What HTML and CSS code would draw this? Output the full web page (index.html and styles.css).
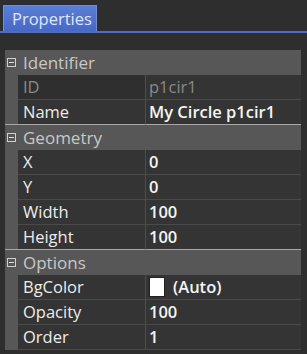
FILE: index.html
```html
<!DOCTYPE html>
<html>
<head>
<meta charset="utf-8">
<link rel="stylesheet" href="styles.css">
</head>
<body>
<div class="tabbar">
  <div class="tab">Properties</div>
</div>
<div class="grid">
  <div class="section">
    <div class="header"><span class="toggle"><svg width="9" height="9" viewBox="0 0 9 9"><rect x="0.5" y="0.5" width="8" height="8" fill="none" stroke="#cfcfcf"/><line x1="2" y1="4.5" x2="7" y2="4.5" stroke="#e0e0e0"/></svg></span>Identifier</div>
    <div class="row disabled"><span class="strip"></span><span class="label">ID</span><span class="value">p1cir1</span></div>
    <div class="row"><span class="strip"></span><span class="label">Name</span><span class="value">My Circle p1cir1</span></div>
  </div>
  <div class="section">
    <div class="header"><span class="toggle"><svg width="9" height="9" viewBox="0 0 9 9"><rect x="0.5" y="0.5" width="8" height="8" fill="none" stroke="#cfcfcf"/><line x1="2" y1="4.5" x2="7" y2="4.5" stroke="#e0e0e0"/></svg></span>Geometry</div>
    <div class="row"><span class="strip"></span><span class="label">X</span><span class="value">0</span></div>
    <div class="row"><span class="strip"></span><span class="label">Y</span><span class="value">0</span></div>
    <div class="row"><span class="strip"></span><span class="label">Width</span><span class="value">100</span></div>
    <div class="row"><span class="strip"></span><span class="label">Height</span><span class="value">100</span></div>
  </div>
  <div class="section">
    <div class="header"><span class="toggle"><svg width="9" height="9" viewBox="0 0 9 9"><rect x="0.5" y="0.5" width="8" height="8" fill="none" stroke="#cfcfcf"/><line x1="2" y1="4.5" x2="7" y2="4.5" stroke="#e0e0e0"/></svg></span>Options</div>
    <div class="row"><span class="strip"></span><span class="label">BgColor</span><span class="value"><span class="swatch"></span>(Auto)</span></div>
    <div class="row"><span class="strip"></span><span class="label">Opacity</span><span class="value">100</span></div>
    <div class="row"><span class="strip"></span><span class="label">Order</span><span class="value">1</span></div>
  </div>
</div>
</body>
</html>
```
FILE: styles.css
```css
html, body {
  margin: 0;
  padding: 0;
  background: #2e2e2e;
  font-family: "Open Sans", "Noto Sans", sans-serif;
  font-size: 15px;
  color: #e6e6e6;
}
.tabbar {
  padding: 5px 0 0 3px;
  border-bottom: 2px solid #4a6ccb;
  height: 26px;
  display: flex;
}
.tab {
  width: 94px;
  height: 26px;
  box-sizing: border-box;
  background: linear-gradient(#5a7fd6, #4868c6);
  border: 1px solid #6c8ddd;
  border-bottom: none;
  color: #dfe6f6;
  font-size: 16.5px;
  line-height: 25px;
  padding-left: 8px;
  white-space: nowrap;
}
.grid {
  margin: 17px 0 0 5px;
  width: 296px;
}
.header {
  height: 25px;
  background: #575757;
  display: flex;
  align-items: center;
  color: #c8c8c8;
  font-size: 17px;
}
.toggle {
  width: 18px;
  padding-left: 2px;
  box-sizing: border-box;
  display: flex;
  align-items: center;
}
.row {
  height: 25px;
  display: flex;
}
.strip {
  width: 13px;
  background: #575757;
  flex: none;
  box-sizing: border-box;
}
.label, .value {
  box-sizing: border-box;
  height: 25px;
  border-bottom: 1px solid #4a4a4a;
  background: #343434;
  display: flex;
  align-items: center;
  line-height: 24px;
  font-size: 16.5px;
  white-space: nowrap;
}
.label {
  width: 128px;
  padding-left: 5px;
  border-right: 1px solid #4e4e4e;
  color: #ececec;
}
.value {
  flex: 1;
  padding-left: 3px;
  font-weight: 600;
  color: #f4f4f4;
}
.disabled .label {
  color: #8a8a8a;
  background: #2f2f2f;
}
.disabled .value {
  color: #8a8a8a;
  font-weight: 400;
}
.section:not(:last-child) .row:last-child .label,
.section:not(:last-child) .row:last-child .value,
.section:not(:last-child) .row:last-child .strip {
  border-bottom: 1px solid #a8a8a8;
}
.swatch {
  width: 16px;
  height: 20px;
  background: #ffffff;
  border: 1px solid #222;
  box-sizing: border-box;
  margin-right: 8px;
}
```
